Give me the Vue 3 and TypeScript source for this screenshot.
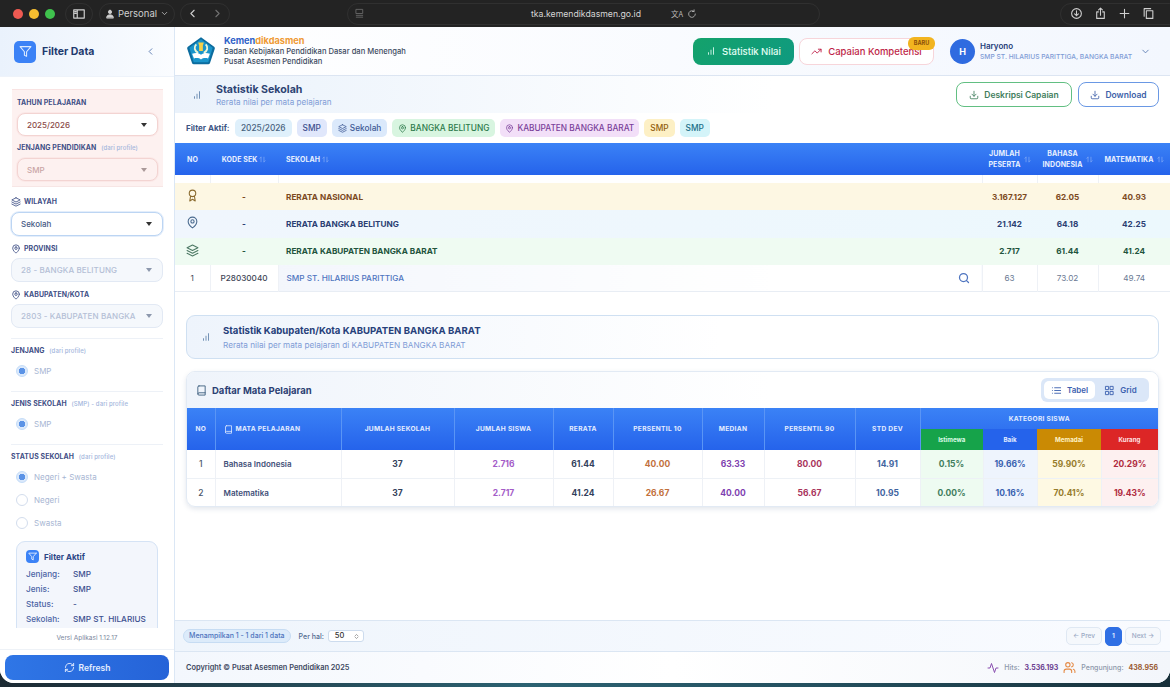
<script setup lang="ts">
const icons: Record<string, string> = {
  filter: 'M22 3H2l8 9.46V19l4 2v-8.54L22 3z',
  chart: 'M12 20V10M18 20V4M6 20v-4',
  left: 'm15 18-6-6 6-6',
  right: 'm9 18 6-6-6-6',
  down: 'm6 9 6 6 6-6',
  layers: 'M12 2 2 7l10 5 10-5-10-5zM2 17l10 5 10-5M2 12l10 5 10-5',
  pin: 'M20 10c0 6-8 12-8 12s-8-6-8-12a8 8 0 0 1 16 0ZM12 7a3 3 0 1 0 0 6 3 3 0 0 0 0-6z',
  award: 'M12 2a6 6 0 1 0 0 12 6 6 0 0 0 0-12zM15.5 12.9 17 22l-5-3-5 3 1.5-9.1',
  download: 'M21 15v4a2 2 0 0 1-2 2H5a2 2 0 0 1-2-2v-4M7 10l5 5 5-5M12 15V3',
  search: 'M11 3a8 8 0 1 0 0 16 8 8 0 0 0 0-16zM21 21l-4.3-4.3',
  trend: 'M22 7l-8.5 8.5-5-5L2 17M16 7h6v6',
  book: 'M4 19.5A2.5 2.5 0 0 1 6.5 17H20M6.5 2H20v20H6.5A2.5 2.5 0 0 1 4 19.5v-15A2.5 2.5 0 0 1 6.5 2z',
  list: 'M8 6h13M8 12h13M8 18h13M3 6h.01M3 12h.01M3 18h.01',
  grid: 'M4 3h6v7H4zM14 3h6v7h-6zM4 14h6v7H4zM14 14h6v7h-6z',
  refresh: 'M3 12a9 9 0 0 1 15-6.7L21 8M21 3v5h-5M21 12a9 9 0 0 1-15 6.7L3 16M3 21v-5h5',
  activity: 'M22 12h-4l-3 9L9 3l-3 9H2',
  users: 'M16 21v-2a4 4 0 0 0-4-4H6a4 4 0 0 0-4 4v2M9 3a4 4 0 1 0 0 8 4 4 0 0 0 0-8zM22 21v-2a4 4 0 0 0-3-3.87M16 3.13a4 4 0 0 1 0 7.75',
  sort: 'M7 4v16M7 4 3 8M17 20V4M17 20l4-4',
  updown: 'M7 10l5-5 5 5M7 14l5 5 5-5',
  sidebar: 'M3 5h18v14H3zM9 5v14M5 8h2M5 11h2',
  person: 'M12 3a4 4 0 1 0 0 8 4 4 0 0 0 0-8zM4 21c0-5 3-7 8-7s8 2 8 7z',
  monitor: 'M5 3h14v9H5zM5 16h14M5 20h14',
  reload: 'M20 12a8 8 0 1 1-3-6.2M17 2v4h-4',
  circleDown: 'M12 3a9 9 0 1 0 0 18 9 9 0 0 0 0-18zM12 7v9M8.5 12.5 12 16l3.5-3.5',
  share: 'M8 9H5v12h14V9h-3M12 15V2M8.5 5.5 12 2l3.5 3.5',
  plus: 'M12 4v16M4 12h16',
  tabs: 'M8 7h12v14H8zM4 17V3h12',
}

const chips = [
  { text: '2025/2026', cls: 'c-sky' },
  { text: 'SMP', cls: 'c-indigo' },
  { text: 'Sekolah', cls: 'c-blue', icon: 'layers' },
  { text: 'BANGKA BELITUNG', cls: 'c-green', icon: 'pin' },
  { text: 'KABUPATEN BANGKA BARAT', cls: 'c-purple', icon: 'pin' },
  { text: 'SMP', cls: 'c-yellow' },
  { text: 'SMP', cls: 'c-cyan' },
]

const averages = [
  { icon: 'award', cls: 'r-nas', name: 'RERATA NASIONAL', total: '3.167.127', bi: '62.05', mat: '40.93' },
  { icon: 'pin', cls: 'r-prov', name: 'RERATA BANGKA BELITUNG', total: '21.142', bi: '64.18', mat: '42.25' },
  { icon: 'layers', cls: 'r-kab', name: 'RERATA KABUPATEN BANGKA BARAT', total: '2.717', bi: '61.44', mat: '41.24' },
]

const subjects = [
  { no: 1, name: 'Bahasa Indonesia', schools: 37, students: '2.716', avg: '61.44', p10: '40.00', median: '63.33', p90: '80.00', std: '14.91', a: '0.15%', b: '19.66%', c: '59.90%', d: '20.29%' },
  { no: 2, name: 'Matematika', schools: 37, students: '2.717', avg: '41.24', p10: '26.67', median: '40.00', p90: '56.67', std: '10.95', a: '0.00%', b: '10.16%', c: '70.41%', d: '19.43%' },
]

const statusOptions = [
  { label: 'Negeri + Swasta', on: true },
  { label: 'Negeri', on: false },
  { label: 'Swasta', on: false },
]

const activeFilter = [
  { k: 'Jenjang:', v: 'SMP' },
  { k: 'Jenis:', v: 'SMP' },
  { k: 'Status:', v: '-' },
  { k: 'Sekolah:', v: 'SMP ST. HILARIUS PARITTIGA' },
]
</script>

<template>
  <div class="screen">
    <div class="browser">
      <div class="lights"><i class="red"></i><i class="amber"></i><i class="lime"></i></div>
      <div class="pill p-side"><svg class="ic ic14" viewBox="0 0 24 24"><path :d="icons.sidebar" /></svg></div>
      <div class="pill p-profile">
        <svg class="ic ic10 solid" viewBox="0 0 24 24"><path :d="icons.person" /></svg>
        <span>Personal</span>
        <svg class="ic ic9" viewBox="0 0 24 24"><path :d="icons.down" /></svg>
      </div>
      <div class="pill p-nav">
        <svg class="ic ic13" viewBox="0 0 24 24"><path :d="icons.left" /></svg>
        <svg class="ic ic13 dim" viewBox="0 0 24 24"><path :d="icons.right" /></svg>
      </div>
      <div class="address">
        <svg class="ic ic11 dim" viewBox="0 0 24 24"><path :d="icons.monitor" /></svg>
        <span class="url">tka.kemendikdasmen.go.id</span>
        <span class="translate">文A</span>
        <svg class="ic ic10" viewBox="0 0 24 24"><path :d="icons.reload" /></svg>
      </div>
      <div class="pill p-tools">
        <svg class="ic ic13" viewBox="0 0 24 24"><path :d="icons.circleDown" /></svg>
        <svg class="ic ic13" viewBox="0 0 24 24"><path :d="icons.share" /></svg>
        <svg class="ic ic13" viewBox="0 0 24 24"><path :d="icons.plus" /></svg>
        <svg class="ic ic13" viewBox="0 0 24 24"><path :d="icons.tabs" /></svg>
      </div>
    </div>

    <div class="window">
      <aside class="sidebar">
        <div class="side-head">
          <span class="filter-badge"><svg class="ic ic13" viewBox="0 0 24 24"><path :d="icons.filter" /></svg></span>
          <strong>Filter Data</strong>
          <svg class="ic ic11 collapse" viewBox="0 0 24 24"><path :d="icons.left" /></svg>
        </div>

        <div class="side-scroll">
          <div class="year-box">
            <label class="lbl">TAHUN PELAJARAN</label>
            <div class="select red-select"><span>2025/2026</span><i class="caret"></i></div>
            <label class="lbl second">JENJANG PENDIDIKAN <em>(dari profile)</em></label>
            <div class="select red-select off"><span>SMP</span><i class="caret"></i></div>
          </div>

          <label class="lbl ico-lbl"><svg class="ic ic10" viewBox="0 0 24 24"><path :d="icons.layers" /></svg>WILAYAH</label>
          <div class="select blue-select"><span>Sekolah</span><i class="caret dark"></i></div>

          <label class="lbl ico-lbl gap"><svg class="ic ic10" viewBox="0 0 24 24"><path :d="icons.pin" /></svg>PROVINSI</label>
          <div class="select grey-select"><span>28 - BANGKA BELITUNG</span><i class="caret"></i></div>

          <label class="lbl ico-lbl gap"><svg class="ic ic10" viewBox="0 0 24 24"><path :d="icons.pin" /></svg>KABUPATEN/KOTA</label>
          <div class="select grey-select"><span>2803 - KABUPATEN BANGKA</span><i class="caret"></i></div>

          <div class="group">
            <label class="lbl">JENJANG <em>(dari profile)</em></label>
            <div class="radio"><i class="dot on"></i>SMP</div>
          </div>
          <div class="group">
            <label class="lbl">JENIS SEKOLAH <em>(SMP) - dari profile</em></label>
            <div class="radio"><i class="dot on"></i>SMP</div>
          </div>
          <div class="group">
            <label class="lbl">STATUS SEKOLAH <em>(dari profile)</em></label>
            <div v-for="o in statusOptions" :key="o.label" class="radio">
              <i class="dot" :class="{ on: o.on }"></i>{{ o.label }}
            </div>
          </div>

          <div class="active-card">
            <div class="active-title">
              <span class="mini-badge"><svg class="ic ic9" viewBox="0 0 24 24"><path :d="icons.filter" /></svg></span>
              Filter Aktif
            </div>
            <div v-for="r in activeFilter" :key="r.k" class="active-row">
              <span>{{ r.k }}</span><b>{{ r.v }}</b>
            </div>
          </div>
        </div>

        <div class="version">Versi Aplikasi 1.12.17</div>
        <div class="side-foot">
          <button class="refresh"><svg class="ic ic11" viewBox="0 0 24 24"><path :d="icons.refresh" /></svg>Refresh</button>
        </div>
      </aside>

      <main class="main">
        <header class="topbar">
          <svg class="logo" viewBox="0 0 32 32">
            <path d="M16 1.2 30 11.4a2 2 0 0 1 .7 2.2L25.6 28.8a2 2 0 0 1-1.9 1.4H8.3a2 2 0 0 1-1.9-1.4L1.3 13.6a2 2 0 0 1 .7-2.2z" fill="#0c6c9e" />
            <path d="M16 3.5 28.4 12.6 23.8 28H8.2L3.6 12.6z" fill="#1a95cb" />
            <path d="M13 7h6l-1 3v6h-4v-6z" fill="#f5d04a" />
            <path d="M11 9c-3 3-2 7 2 9M21 9c3 3 2 7-2 9" stroke="#eef6d8" stroke-width="2" fill="none" />
            <path d="M6.5 19c4-1.5 7-1 9.5 1 2.5-2 5.5-2.5 9.5-1l-2 5c-3-1-5.5-.5-7.5 1-2-1.5-4.5-2-7.5-1z" fill="#fff" />
          </svg>
          <div class="org">
            <div class="org-name">Kemen<span>dikdasmen</span></div>
            <div class="org-sub">Badan Kebijakan Pendidikan Dasar dan Menengah</div>
            <div class="org-sub">Pusat Asesmen Pendidikan</div>
          </div>
          <div class="nav-btns">
            <button class="nav-btn active"><svg class="ic ic10" viewBox="0 0 24 24"><path :d="icons.chart" /></svg>Statistik Nilai</button>
            <button class="nav-btn outline">
              <svg class="ic ic11" viewBox="0 0 24 24"><path :d="icons.trend" /></svg>Capaian Kompetensi
              <span class="baru">BARU</span>
            </button>
          </div>
          <div class="user">
            <span class="avatar">H</span>
            <div class="user-text">
              <div class="user-name">Haryono</div>
              <div class="user-school">SMP ST. HILARIUS PARITTIGA, BANGKA BARAT</div>
            </div>
            <svg class="ic ic11 user-chev" viewBox="0 0 24 24"><path :d="icons.down" /></svg>
          </div>
        </header>

        <div class="content">
          <div class="title-row">
            <svg class="ic ic10 title-ic" viewBox="0 0 24 24"><path :d="icons.chart" /></svg>
            <div>
              <h2>Statistik Sekolah</h2>
              <p>Rerata nilai per mata pelajaran</p>
            </div>
            <div class="title-actions">
              <button class="act green"><svg class="ic ic10" viewBox="0 0 24 24"><path :d="icons.download" /></svg>Deskripsi Capaian</button>
              <button class="act blue"><svg class="ic ic10" viewBox="0 0 24 24"><path :d="icons.download" /></svg>Download</button>
            </div>
          </div>

          <div class="chips">
            <span class="chips-label">Filter Aktif:</span>
            <span v-for="(c, i) in chips" :key="i" class="chip" :class="c.cls">
              <svg v-if="c.icon" class="ic ic9" viewBox="0 0 24 24"><path :d="icons[c.icon]" /></svg>{{ c.text }}
            </span>
          </div>

          <table class="school-table">
            <colgroup>
              <col class="w35" /><col class="w68" /><col /><col class="w55" /><col class="w61" /><col class="w72" />
            </colgroup>
            <thead>
              <tr>
                <th>NO</th>
                <th>KODE SEK <svg class="ic sort" viewBox="0 0 24 24"><path :d="icons.sort" /></svg></th>
                <th class="left">SEKOLAH <svg class="ic sort" viewBox="0 0 24 24"><path :d="icons.sort" /></svg></th>
                <th><span class="th-wrap"><span>JUMLAH<br />PESERTA</span><svg class="ic sort" viewBox="0 0 24 24"><path :d="icons.sort" /></svg></span></th>
                <th><span class="th-wrap"><span>BAHASA<br />INDONESIA</span><svg class="ic sort" viewBox="0 0 24 24"><path :d="icons.sort" /></svg></span></th>
                <th><span class="th-wrap"><span>MATEMATIKA</span><svg class="ic sort" viewBox="0 0 24 24"><path :d="icons.sort" /></svg></span></th>
              </tr>
            </thead>
            <tbody>
              <tr class="spacer"><td></td><td></td><td></td><td></td><td></td><td></td></tr>
              <tr v-for="a in averages" :key="a.name" class="avg" :class="a.cls">
                <td><svg class="ic ic13" viewBox="0 0 24 24"><path :d="icons[a.icon]" /></svg></td>
                <td>-</td>
                <td class="left">{{ a.name }}</td>
                <td>{{ a.total }}</td>
                <td>{{ a.bi }}</td>
                <td>{{ a.mat }}</td>
              </tr>
              <tr class="school">
                <td class="row-no">1</td>
                <td class="code">P28030040</td>
                <td class="left shaded">
                  <span class="school-cell">
                    <span class="school-link">SMP ST. HILARIUS PARITTIGA</span>
                    <svg class="ic ic12 mag" viewBox="0 0 24 24"><path :d="icons.search" /></svg>
                  </span>
                </td>
                <td>63</td>
                <td>73.02</td>
                <td>49.74</td>
              </tr>
            </tbody>
          </table>

          <section class="kab-title">
            <svg class="ic ic10 title-ic" viewBox="0 0 24 24"><path :d="icons.chart" /></svg>
            <div>
              <h3>Statistik Kabupaten/Kota KABUPATEN BANGKA BARAT</h3>
              <p>Rerata nilai per mata pelajaran di KABUPATEN BANGKA BARAT</p>
            </div>
          </section>

          <section class="subject-card">
            <div class="subject-head">
              <svg class="ic ic11 book" viewBox="0 0 24 24"><path :d="icons.book" /></svg>
              <h3>Daftar Mata Pelajaran</h3>
              <div class="toggle">
                <span class="tog on"><svg class="ic ic11" viewBox="0 0 24 24"><path :d="icons.list" /></svg>Tabel</span>
                <span class="tog"><svg class="ic ic11" viewBox="0 0 24 24"><path :d="icons.grid" /></svg>Grid</span>
              </div>
            </div>
            <table class="subject-table">
              <colgroup>
                <col class="s28" /><col class="s126" /><col class="s113" /><col class="s99" /><col class="s60" />
                <col class="s89" /><col class="s62" /><col class="s91" /><col class="s65" />
                <col class="s63" /><col class="s54" /><col class="s64" /><col />
              </colgroup>
              <thead>
                <tr>
                  <th rowspan="2">NO</th>
                  <th rowspan="2" class="left"><span class="th-mapel"><svg class="ic ic9" viewBox="0 0 24 24"><path :d="icons.book" /></svg>MATA PELAJARAN</span></th>
                  <th rowspan="2">JUMLAH SEKOLAH</th>
                  <th rowspan="2">JUMLAH SISWA</th>
                  <th rowspan="2">RERATA</th>
                  <th rowspan="2">PERSENTIL 10</th>
                  <th rowspan="2">MEDIAN</th>
                  <th rowspan="2">PERSENTIL 90</th>
                  <th rowspan="2">STD DEV</th>
                  <th colspan="4" class="kategori">KATEGORI SISWA</th>
                </tr>
                <tr>
                  <th class="k-a">Istimewa</th>
                  <th class="k-b">Baik</th>
                  <th class="k-c">Memadai</th>
                  <th class="k-d">Kurang</th>
                </tr>
              </thead>
              <tbody>
                <tr v-for="s in subjects" :key="s.no">
                  <td class="plain">{{ s.no }}</td>
                  <td class="left subject-name">{{ s.name }}</td>
                  <td class="navy">{{ s.schools }}</td>
                  <td class="violet">{{ s.students }}</td>
                  <td class="navy">{{ s.avg }}</td>
                  <td class="orange">{{ s.p10 }}</td>
                  <td class="purple">{{ s.median }}</td>
                  <td class="rose">{{ s.p90 }}</td>
                  <td class="steel">{{ s.std }}</td>
                  <td class="v-a">{{ s.a }}</td>
                  <td class="v-b">{{ s.b }}</td>
                  <td class="v-c">{{ s.c }}</td>
                  <td class="v-d">{{ s.d }}</td>
                </tr>
              </tbody>
            </table>
          </section>
        </div>

        <div class="pager">
          <span class="showing">Menampilkan 1 - 1 dari 1 data</span>
          <span class="per">Per hal:</span>
          <span class="per-select">50<svg class="ic updown" viewBox="0 0 24 24"><path :d="icons.updown" /></svg></span>
          <div class="pages">
            <span class="pg">← Prev</span>
            <span class="pg cur">1</span>
            <span class="pg">Next →</span>
          </div>
        </div>

        <footer class="foot">
          <span class="copy">Copyright © Pusat Asesmen Pendidikan 2025</span>
          <div class="counter">
            <svg class="ic ic12 c-act" viewBox="0 0 24 24"><path :d="icons.activity" /></svg>
            <span class="muted">Hits:</span><b class="hits">3.536.193</b>
            <svg class="ic ic13 c-usr" viewBox="0 0 24 24"><path :d="icons.users" /></svg>
            <span class="muted">Pengunjung:</span><b class="visits">438.956</b>
          </div>
        </footer>
      </main>
    </div>
  </div>
</template>

<style>
html, body { margin: 0; background: #1d3a45; }
</style>

<style scoped>
* { box-sizing: border-box; }
.screen {
  width: 1170px;
  height: 687px;
  overflow: hidden;
  display: flex;
  flex-direction: column;
  font-family: Inter, "Noto Sans", sans-serif;
  background: linear-gradient(90deg, #1c2a33, #2c6272 45%, #24505f 70%, #18303a);
  color: #1e3a8a;
}
.ic { fill: none; stroke: currentColor; stroke-width: 2; stroke-linecap: round; stroke-linejoin: round; flex: none; }
.ic9 { width: 9px; height: 9px; }
.ic10 { width: 10px; height: 10px; }
.ic11 { width: 11px; height: 11px; }
.ic12 { width: 12px; height: 12px; }
.ic13 { width: 13px; height: 13px; }
.ic14 { width: 14px; height: 14px; }
.solid { fill: currentColor; }
.dim { opacity: 0.45; }

.browser {
  height: 27px;
  flex: none;
  background: #232323;
  color: #cfcfcf;
  display: flex;
  align-items: center;
  padding-left: 13px;
  font-size: 9.5px;
  position: relative;
}
.lights { display: flex; gap: 6px; width: 52px; }
.lights i { width: 10px; height: 10px; border-radius: 50%; }
.red { background: #ee5a52; }
.amber { background: #f5bd30; }
.lime { background: #3fc24d; }
.pill {
  height: 22px;
  border: 1px solid #303030;
  border-radius: 11px;
  display: flex;
  align-items: center;
  justify-content: center;
}
.p-side { width: 28px; }
.p-profile { width: 76px; margin-left: 6px; gap: 3px; }
.p-nav { width: 50px; margin-left: 5px; gap: 12px; }
.address {
  width: 473px;
  height: 22px;
  margin-left: 117px;
  border: 1px solid #303030;
  border-radius: 11px;
  display: flex;
  align-items: center;
  padding: 0 8px 0 6px;
  color: #b8b8b8;
}
.url { margin-left: 166px; color: #d6d6d6; font-size: 8.7px; width: 134px; white-space: nowrap; }
.translate { font-size: 7.5px; margin-left: 6px; margin-right: 4px; font-family: "Noto Sans CJK SC", sans-serif; }
.p-tools { width: 120px; margin-left: auto; margin-right: -10px; gap: 11px; justify-content: flex-start; padding-left: 9px; }

.window {
  height: 656px;
  flex: none;
  display: flex;
  border-radius: 0 0 14px 14px;
  overflow: hidden;
  background: #fff;
}

/* sidebar */
.sidebar {
  width: 175px;
  flex: none;
  display: flex;
  flex-direction: column;
  border-right: 1px solid #dbe7f5;
  background: #fff;
}
.side-head {
  height: 50px;
  flex: none;
  display: flex;
  align-items: center;
  padding: 0 18px 0 14px;
  gap: 6px;
  background: linear-gradient(90deg, #eaf2fc, #fafcff);
  border-bottom: 1px solid #eef3fa;
  font-size: 10.5px;
  color: #1e3a6e;
}
.filter-badge {
  width: 22px;
  height: 22px;
  border-radius: 5px;
  background: #3b82f6;
  color: #dbeafe;
  display: flex;
  align-items: center;
  justify-content: center;
}
.collapse { margin-left: auto; color: #5b7bb0; }
.side-scroll {
  flex: 1;
  min-height: 0;
  overflow: hidden;
  padding: 12px 11px 0 11px;
}
.lbl {
  display: block;
  font-size: 6.9px;
  line-height: 10px;
  font-weight: 700;
  color: #3f4f86;
  letter-spacing: 0.1px;
}
.lbl em { font-style: normal; font-weight: 500; color: #a3b6dc; margin-left: 3px; font-size: 6px; }
.year-box {
  width: 151px;
  margin: 0 0 10px 1px;
  padding: 8px 5px 5px;
  background: #fdf1f0;
  border-top: 1px solid #f9e3e2;
  border-bottom: 1px solid #f7e6e5;
}
.select {
  height: 24px;
  border-radius: 8px;
  display: flex;
  align-items: center;
  justify-content: space-between;
  padding: 0 10px 0 9px;
  font-size: 8px;
  font-weight: 500;
  background: #fff;
  margin-top: 5px;
}
.caret { border: 3px solid transparent; border-top: 4px solid #333; border-bottom: 0; width: 0; height: 0; }
.red-select { border: 1px solid #f3d4d2; color: #8a4a48; box-shadow: 0 0 0 1px #fbe8e7; height: 23px; }
.red-select.off { background: #fdf1f0; color: #c9a5a5; }
.red-select.off .caret { border-top-color: #a99; }
.second { margin-top: 7px; }
.ico-lbl { display: flex; align-items: center; gap: 3px; }
.blue-select { border: 1px solid #bcd5f3; color: #475a85; box-shadow: 0 0 0 1px #e4eefb; margin-top: 5px; }
.grey-select { border: 1px solid #e2e9f4; color: #b4bfd6; background: #f5f8fc; letter-spacing: 0.1px; margin-top: 4px; }
.grey-select .caret { border-top-color: #8d98ad; }
.gap { margin-top: 8px; }
.group { border-top: 1px solid #edf1f7; margin-top: 10px; padding-top: 7px; }
.group + .group { margin-top: 9px; }
.group .lbl { margin-bottom: 3px; }
.radio {
  display: flex;
  align-items: center;
  gap: 6px;
  height: 23px;
  padding-left: 5px;
  font-size: 8px;
  color: #a8b6d3;
}
.dot { width: 12px; height: 12px; border-radius: 50%; border: 1.5px solid #d3dded; background: #fff; flex: none; }
.dot.on { border-color: #c4dcf8; background: radial-gradient(circle, #5b93e6 0 3px, #dbe9fb 3.5px); }
.active-card {
  margin: 7px 5px 0;
  padding: 8px 9px;
  border: 1.5px solid #d5e3f5;
  border-radius: 9px;
  background: #f3f6fc;
  height: 130px;
}
.active-title { display: flex; align-items: center; gap: 5px; font-size: 8px; font-weight: 700; color: #2b4585; margin-bottom: 4px; }
.mini-badge { width: 13px; height: 13px; border-radius: 4px; background: #3b82f6; color: #fff; display: flex; align-items: center; justify-content: center; }
.active-row { display: grid; grid-template-columns: 47px 1fr; font-size: 8.2px; line-height: 15px; color: #4b64a5; font-weight: 500; }
.active-row b { font-weight: 500; color: #3b4f8f; line-height: 13px; padding-top: 1px; }
.version { height: 21px; flex: none; background: #fff; text-align: center; font-size: 6.5px; line-height: 21px; color: #7a869c; position: relative; }
.side-foot { height: 34px; flex: none; border-top: 1px solid #eef2f7; padding: 5px 5px 3px; }
.refresh {
  width: 164px;
  height: 25px;
  border: 0;
  border-radius: 8px;
  background: linear-gradient(90deg, #2f76e6, #2563d8);
  color: #e6efff;
  font: 600 8.5px Inter, sans-serif;
  display: flex;
  align-items: center;
  justify-content: center;
  gap: 4px;
}

/* main */
.main { flex: 1; min-width: 0; display: flex; flex-direction: column; background: #fff; }
.topbar {
  height: 49px;
  flex: none;
  display: flex;
  align-items: center;
  padding: 0 16px 0 11px;
  background: linear-gradient(90deg, #fff, #f3f7fe);
  border-bottom: 1px solid #dce5f2;
}
.logo { width: 30px; height: 30px; flex: none; }
.org { margin-left: 8px; }
.org-name { font-size: 9.2px; font-weight: 700; color: #2f62c8; line-height: 12px; }
.org-name span { color: #ef9a35; }
.org-sub { font-size: 7.6px; font-weight: 500; line-height: 10px; color: #3c4a60; }
.nav-btns { margin-left: auto; display: flex; gap: 5px; }
.nav-btn {
  height: 27px;
  border-radius: 8px;
  font: 500 9.5px Inter, sans-serif;
  display: flex;
  align-items: center;
  justify-content: center;
  gap: 6px;
  position: relative;
  white-space: nowrap;
}
.nav-btn.active { width: 101px; border: 0; color: #e4fff5; background: linear-gradient(135deg, #14a26b, #0f9a80); }
.nav-btn.outline { width: 135px; background: #fff; border: 1.5px solid #f7d5da; color: #be1f47; }
.baru {
  position: absolute;
  top: -2px;
  right: -2px;
  width: 27px;
  height: 13px;
  border-radius: 6px;
  background: #f2b41f;
  color: #8a4f0a;
  font-size: 5.5px;
  font-weight: 700;
  line-height: 13px;
  text-align: center;
}
.user { display: flex; align-items: center; margin-left: 16px; width: 204px; }
.avatar { width: 25px; height: 25px; border-radius: 50%; background: #2f6be0; color: #fff; font-size: 9px; font-weight: 700; display: flex; align-items: center; justify-content: center; flex: none; }
.user-text { margin-left: 5px; }
.user-name { font-size: 8px; font-weight: 600; color: #26407a; line-height: 11px; }
.user-school { font-size: 6.7px; font-weight: 500; line-height: 10px; color: #7f9cd6; white-space: nowrap; }
.user-chev { margin-left: auto; margin-right: 3px; color: #5f7fb5; }

.content { flex: 1; min-height: 0; overflow: hidden; background: #fff; }
.title-row {
  height: 37px;
  display: flex;
  align-items: center;
  padding: 0 11px 0 17px;
  background: linear-gradient(90deg, #eaf2fb, #fff 60%);
}
.title-ic { color: #5b7fa8; flex: none; }
.title-row > div:nth-child(2) { margin: 1px 0 0 14px; }
.title-row h2 { margin: 0; font-size: 10.6px; line-height: 13px; font-weight: 700; color: #2d4373; }
.title-row p { margin: 1px 0 0; font-size: 8.1px; line-height: 11px; color: #7f9cd6; }
.title-actions { margin-left: auto; display: flex; gap: 6px; }
.act {
  height: 25px;
  border-radius: 8px;
  background: #fff;
  font: 600 8.5px Inter, sans-serif;
  display: flex;
  align-items: center;
  justify-content: center;
  gap: 5px;
}
.act.green { width: 116px; border: 1.5px solid #62bf82; color: #3f7d5c; }
.act.blue { width: 81px; border: 1.5px solid #6a98e4; color: #3d5fa8; }
.chips { height: 30px; display: flex; align-items: center; gap: 5px; padding-left: 11px; font-size: 8.3px; }
.chips-label { font-weight: 700; font-size: 8px; color: #3d5583; width: 44px; }
.chip { height: 18px; border-radius: 5px; padding: 0 6px; display: flex; align-items: center; gap: 3px; font-weight: 500; white-space: nowrap; }
.c-sky { background: #dff0fb; color: #48627d; }
.c-indigo { background: #e0e7fb; color: #3f4f8e; }
.c-blue { background: #dbe9fb; color: #3f5a96; }
.c-green { background: #d8f5e0; color: #2c7a4b; }
.c-purple { background: #f2dff8; color: #7a3f9a; padding: 0 5px; }
.c-yellow { background: #fdf0c5; color: #92600f; }
.c-cyan { background: #d4f4f9; color: #1b6f88; }

table { width: 100%; border-collapse: collapse; table-layout: fixed; }
.w35 { width: 35px; }
.w68 { width: 68px; }
.w55 { width: 55px; }
.w61 { width: 61px; }
.w72 { width: 72px; }
.school-table thead tr { height: 32px; background: linear-gradient(180deg, #3b82f6, #2563eb); }
.school-table th { color: #e8f0ff; font-size: 7px; font-weight: 700; padding: 0; letter-spacing: 0.1px; line-height: 11px; }
.school-table td.left, .school-table th.left, .subject-table td.left, .subject-table th.left { text-align: left; padding-left: 8px; }
.sort { width: 7px; height: 7px; opacity: 0.55; vertical-align: -1px; }
.th-wrap { display: flex; align-items: center; justify-content: center; gap: 3px; }
.spacer { height: 8px; }
.spacer td { padding: 0; }
.spacer td + td { border-left: 1px solid #eef1f6; }
.school-table td { text-align: center; font-size: 8.2px; padding: 0; }
.avg { height: 27.3px; font-weight: 700; }
.r-nas { background: #fdf7e3; color: #7c4a1e; }
.r-nas .ic { color: #8a6a2e; }
.r-prov { background: linear-gradient(90deg, #f0f6fd, #ecf8fd); color: #2b3f73; }
.r-prov .ic { color: #4a6a8e; }
.r-kab { background: #effbf2; color: #22543d; }
.r-kab .ic { color: #4f7a66; }
.school { height: 27px; border-bottom: 1px solid #e8edf4; color: #6b7a94; }
.school td + td { border-left: 1px solid #eef1f6; }
.school .row-no { color: #3e4656; }
.school .code { color: #3e4656; font-weight: 500; }
.shaded { background: linear-gradient(90deg, #f3f6fc, #fff 70%); }
.school-cell { display: flex; align-items: center; justify-content: space-between; padding-right: 12px; }
.school-link { color: #4f75c0; font-weight: 500; }
.mag { color: #4f75c0; stroke-width: 2.5; }

.kab-title {
  margin: 23px 11px 0 11px;
  height: 44px;
  border: 1.5px solid #cfe0f2;
  border-radius: 9px;
  display: flex;
  align-items: center;
  padding-left: 14px;
  gap: 12px;
  background: linear-gradient(90deg, #eef4fc, #fff 55%);
}
.kab-title h3 { margin: 0; font-size: 9.6px; line-height: 14px; color: #26407a; font-weight: 700; }
.kab-title p { margin: 2px 0 0; font-size: 8.2px; line-height: 10px; color: #7f9cd6; }
.subject-card {
  margin: 12px 11px 0 11px;
  border-radius: 9px;
  border: 1px solid #e2eaf4;
  overflow: hidden;
  box-shadow: 0 2px 5px rgba(60, 90, 130, 0.15);
}
.subject-head {
  height: 36px;
  display: flex;
  align-items: center;
  padding: 0 9px;
  background: linear-gradient(90deg, #eff4fb, #fff 60%);
}
.book { color: #3f6080; }
.subject-head h3 { margin: 0 0 0 5px; font-size: 9.5px; font-weight: 700; color: #2b3f73; }
.toggle { margin-left: auto; height: 24px; background: #dbe7f8; border-radius: 6px; padding: 3px; display: flex; }
.tog { width: 51px; display: flex; align-items: center; justify-content: center; gap: 5px; font-size: 8px; font-weight: 600; color: #3d62b0; border-radius: 5px; }
.tog.on { background: #fff; }
.s28 { width: 28px; }
.s126 { width: 126px; }
.s113 { width: 113px; }
.s99 { width: 99px; }
.s60 { width: 60px; }
.s89 { width: 89px; }
.s62 { width: 62px; }
.s91 { width: 91px; }
.s65 { width: 65px; }
.s63 { width: 63px; }
.s54 { width: 54px; }
.s64 { width: 64px; }
.subject-table thead { background: linear-gradient(180deg, #3b82f6, #2563eb); }
.subject-table thead tr { height: 21px; }
.subject-table th { color: #e4edff; font-size: 6.6px; font-weight: 700; padding: 0; border-right: 1px solid #5a95f5; letter-spacing: 0.3px; }
.subject-table th:last-child { border-right: 0; }
.th-mapel { display: flex; align-items: center; gap: 3px; }
.subject-table .kategori { border-right: 0; }
.subject-table .k-a, .subject-table .k-b, .subject-table .k-c, .subject-table .k-d { font-size: 6.2px; letter-spacing: 0; border-right: 0; }
.subject-table .k-a { background: #16a34a; color: #dcfce7; }
.subject-table .k-b { background: #2563eb; }
.subject-table .k-c { background: #ca8a04; color: #fef3c7; }
.subject-table .k-d { background: #dc2626; color: #fee2e2; }
.subject-table tbody tr { height: 28px; border-bottom: 1px solid #edf1f6; }
.subject-table tbody tr:last-child { border-bottom: 0; }
.subject-table td { text-align: center; font-size: 8.5px; font-weight: 700; padding: 0; border-right: 1px solid #eef1f6; }
.subject-table td:last-child { border-right: 0; }
.subject-table .plain { color: #4a5568; font-weight: 500; }
.subject-table .subject-name { color: #3f4f78; font-size: 8px; font-weight: 600; }
.navy { color: #33415c; }
.violet { color: #a45cc8; }
.orange { color: #c2703d; }
.purple { color: #7e3fb0; }
.rose { color: #a8345c; }
.steel { color: #3f64a0; }
.v-a { background: #eefbf1; color: #3f7d5c; }
.v-b { background: #eef4fd; color: #3a62b0; }
.v-c { background: #fef9e3; color: #977c2c; }
.v-d { background: #fdf0f0; color: #b02a3e; }

.pager {
  height: 32px;
  flex: none;
  display: flex;
  align-items: center;
  padding: 0 9px 0 8px;
  background: linear-gradient(90deg, #eff5fc, #f9fbff);
  border-top: 1.5px solid #dbe6f3;
  border-bottom: 1.5px solid #dbe6f3;
}
.showing { height: 14px; border-radius: 7px; background: #dcebfa; border: 1px solid #c6dcf3; padding: 0 5px; font-size: 7px; line-height: 12px; color: #4d74bd; font-weight: 500; }
.per { margin-left: 8px; font-size: 7px; font-weight: 500; color: #526a90; }
.per-select { margin-left: 4px; width: 36px; height: 12px; border: 1px solid #cddcee; border-radius: 3px; background: #fff; font-size: 7.5px; font-weight: 500; line-height: 10px; padding-left: 6px; color: #333; display: flex; align-items: center; justify-content: space-between; padding-right: 3px; }
.updown { width: 7px; height: 7px; color: #666; }
.pages { margin-left: auto; display: flex; gap: 3px; align-items: center; }
.pg { height: 18px; width: 36px; border: 1px solid #dfe8f3; border-radius: 5px; background: #f5f8fc; font-size: 6.5px; line-height: 16px; text-align: center; color: #9aa9c4; font-weight: 500; }
.pg.cur { width: 17px; height: 19px; background: #2f6fe4; border-color: #2f6fe4; color: #dbe8ff; font-weight: 700; line-height: 17px; }
.foot {
  height: 31px;
  flex: none;
  display: flex;
  align-items: center;
  justify-content: space-between;
  padding: 0 12px 0 11px;
  background: linear-gradient(90deg, #f3f7fd, #fff 50%, #f3f6fb);
}
.copy { font-size: 7.4px; font-weight: 600; color: #3f4a62; }
.counter { display: flex; align-items: center; gap: 5px; font-size: 7px; }
.muted { color: #8c97aa; font-weight: 500; }
.hits { color: #6a3d8f; }
.visits { color: #9a5a32; }
.c-act { color: #8a4fb0; }
.c-usr { color: #e58a45; }
</style>
